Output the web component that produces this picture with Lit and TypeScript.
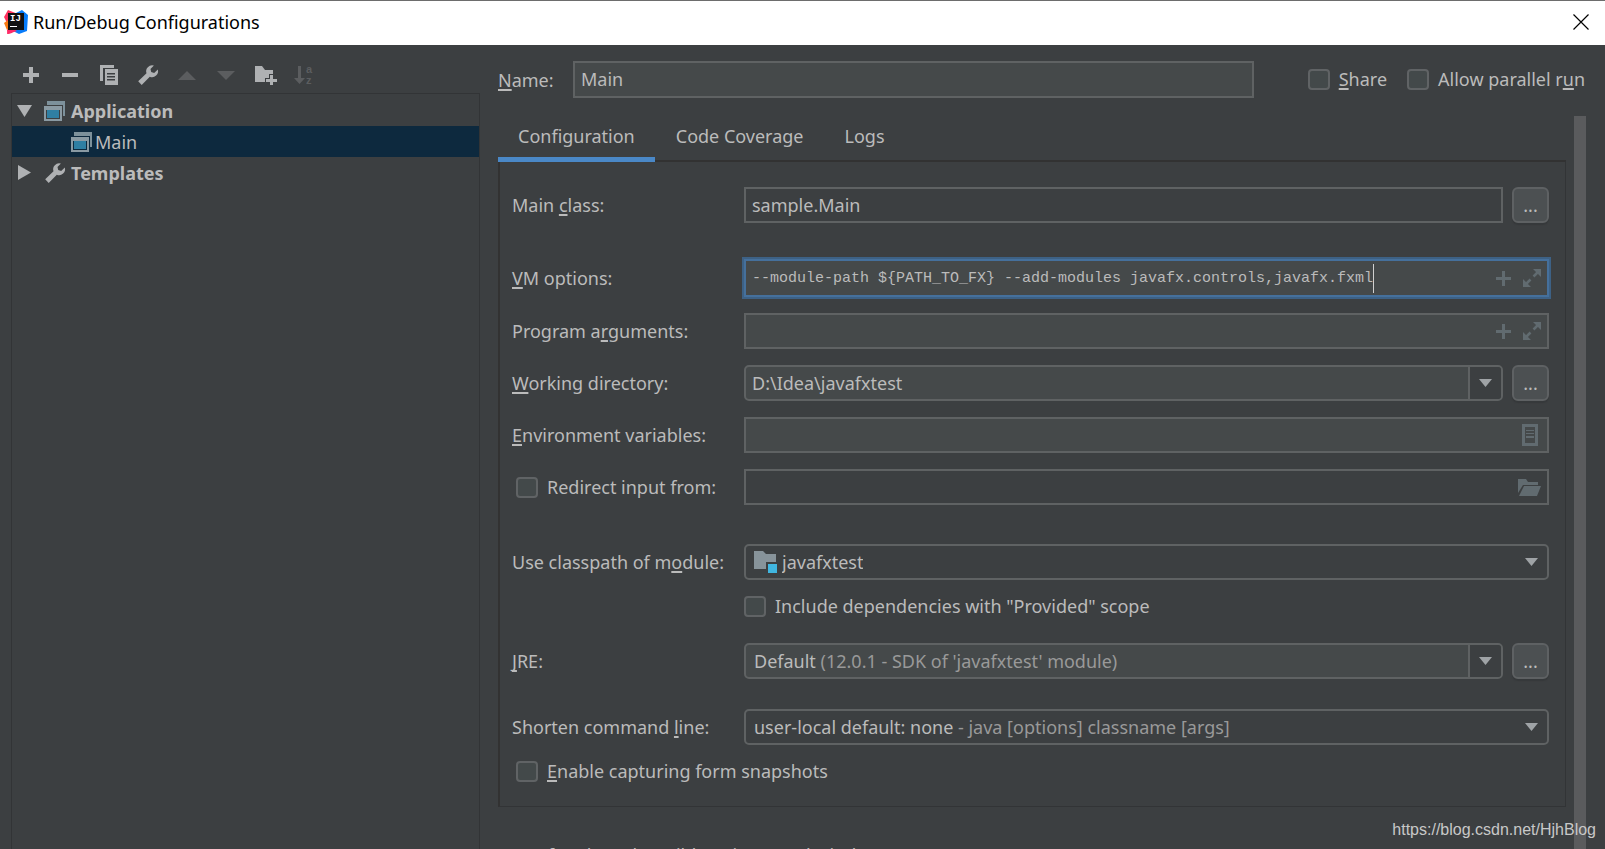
import { LitElement, html, svg, css } from "lit";
import { customElement } from "lit/decorators.js";

const svgIcon = (w: number, h: number, body: unknown) =>
  html`<svg class="icon" width=${w} height=${h} viewBox="0 0 ${w} ${h}" aria-hidden="true">${body}</svg>`;

const plus = (s: number, t: number) => {
  const a = (s - t) / 2;
  return svgIcon(s, s, svg`<path fill="currentColor" d="M${a} 0h${t}v${a}h${a}v${t}h-${a}v${a}h-${t}v-${a}h-${a}v-${t}h${a}z"/>`);
};
const minus = svgIcon(16, 4, svg`<path fill="currentColor" d="M0 0h16v4H0z"/>`);
const copy = svgIcon(18, 20, svg`
  <path fill="currentColor" d="M0 0h14v3H3v13H0z"/>
  <path fill="currentColor" fill-rule="evenodd" d="M5 4h13v16H5zM7 8v1.500h8V8zM7 11v1.500h8V11zM7 14v1.500h8V14z"/>`);
const wrench = svgIcon(20, 20, svg`
  <path fill="currentColor" d="M15.9.6a6 6 0 0 0-7.4 7.7L.2 16.3 3.7 20l8.1-8.3a6 6 0 0 0 8-7.3l-3.6 3.5-3-.8-.7-3z"/>`);
const up = svgIcon(18, 9, svg`<path fill="currentColor" d="M9 0l9 9H0z"/>`);
const down = svgIcon(18, 9, svg`<path fill="currentColor" d="M0 0h18L9 9z"/>`);
const folderAdd = svgIcon(22, 19, svg`
  <path fill="currentColor" d="M1 0h7l3 4h8v4h-4v4h-4v4H1z"/>
  <path fill="currentColor" d="M16 9h3v4h4v3h-4v3h-3v-3h-4v-3h4z"/>`);
const sortAz = svgIcon(20, 20, svg`
  <path fill="currentColor" d="M4 1h3v12h4l-5.500 6L0 13h4z"/>
  <text x="12" y="8" class="glyph">a</text><text x="12" y="19" class="glyph">z</text>`);
const app = svgIcon(22, 20, svg`
  <path fill="#7d919b" d="M3 0h18v15h-2V4H3z"/>
  <path fill="#8a9aa3" fill-rule="evenodd" d="M0 5h18v15H0zM2 9v9h14V9z"/>
  <path fill="#2f7fa3" d="M3 9h12v8H3z"/>`);
const treeDown = svgIcon(15, 12, svg`<path fill="#afb1b3" d="M0 0h15L7.500 12z"/>`);
const treeRight = svgIcon(13, 15, svg`<path fill="#afb1b3" d="M0 0l13 7.500L0 15z"/>`);
const arrow = svgIcon(13, 8, svg`<path fill="#9fa3a6" d="M0 0h13L6.500 8z"/>`);
const expand = svgIcon(18, 18, svg`
  <path fill="currentColor" d="M10 0h8v8zM0 10v8h8z"/>
  <path stroke="currentColor" stroke-width="2.500" d="M15.500 2.500l-5 5M2.500 15.500l5-5"/>`);
const docIcon = svgIcon(16, 22, svg`
  <path fill="currentColor" fill-rule="evenodd" d="M0 0h16v22H0zM3 3v16h10V3z"/>
  <path fill="currentColor" d="M4 6h8v1H4zM4 9h8v1H4zM4 12h8v2H4z"/>`);
const folderOpen = svgIcon(23, 17, svg`
  <path fill="currentColor" d="M0 0h8l2 3h10v3H5L0 14z"/>
  <path fill="currentColor" d="M6 7h17l-4 10H1z"/>`);
const moduleIcon = svgIcon(24, 22, svg`
  <path fill="#87939a" d="M0 0h9l3 3h10v8h-10v7H0z"/>
  <path fill="#40b6e0" d="M14 13h9v9h-9z"/>`);
const logo = svgIcon(24, 24, svg`
  <path fill="#fe315d" d="M4 0l10 4-2 10-4 9-5 1 1-9-4-8z"/>
  <path fill="#f97a12" d="M0 13l4-3 3 6-4 4z"/>
  <path fill="#087cfa" d="M12 3l6-3 6 5-1 16-8 3-8-4z"/>
  <path fill="#fe2a6a" d="M3 20l5-2 5 3-9 3z"/>
  <path fill="#111" d="M4 3h16v17H4z"/>
  <text x="6" y="11" class="logo-text">IJ</text>
  <path fill="#fff" d="M6 16h7v1H6z"/>`);
const closeIcon = svgIcon(16, 16, svg`<path stroke="#000" stroke-width="1.200" d="M.5.5l15 15M15.500.5l-15 15"/>`);

@customElement("app-root")
export class AppRoot extends LitElement {
  static styles = css`
    :host {
      display: flex; flex-direction: column; height: 100vh; overflow: hidden;
      position: relative; background: #3c3f41; color: #bbbbbb;
      font: 18px/24px "Noto Sans", "Open Sans", sans-serif;
    }
    * { box-sizing: border-box; }
    .icon { display: block; flex: none; overflow: visible; }
    .glyph { font: 700 11px "Liberation Sans", sans-serif; fill: currentColor; }
    .logo-text { font: 700 9px "Liberation Mono", monospace; fill: #fff; }
    button, input, select { font: inherit; color: inherit; margin: 0; padding: 0; border: 0; background: none; outline: 0; }
    u { text-decoration-thickness: 2px; text-underline-offset: 2px; text-decoration-skip-ink: none; }

    .titlebar {
      display: flex; align-items: center; flex: none; height: 45px; padding: 0 16px 2px 4px;
      background: #fff; color: #000; border-top: 1px solid #6d6d6d;
    }
    .titlebar h1 { flex: 1; margin: 0 0 0 5px; font-size: 18px; font-weight: 400; }
    .body { display: flex; flex: 1; min-height: 0; }

    .side { display: flex; flex-direction: column; width: 469px; margin: 0 18px 0 11px; }
    .toolbar { display: flex; gap: 15px; padding: 18px 0 6px 8px; }
    .toolbar button { display: grid; place-items: center; width: 24px; height: 24px; color: #afb1b3; }
    .toolbar button:disabled { color: #5b5d5f; }
    .tree { flex: 1; margin: 0; padding: 1px 0 0; border: 1px solid #323436; border-bottom: 0; list-style: none; }
    .node { display: flex; align-items: center; height: 31px; padding-left: 4px; gap: 2px; }
    .node .icon { color: #afb1b3; }
    .twist { display: grid; place-items: center; width: 16px; }
    .kind { display: grid; place-items: center; width: 22px; margin-left: 8px; }
    .group { font-weight: 700; gap: 5px; }
    .group .kind { margin-left: 7px; }
    .selected { background: #0d293e; padding-left: 51px; }

    .main { display: flex; flex-direction: column; flex: 1; min-width: 0; padding-right: 19px; }
    .namebar { display: flex; align-items: center; padding: 16px 1px 18px 0; }
    .namebar > label:first-child { width: 75px; }
    .namebar .field { flex: 1; height: 37px; padding-bottom: 1px; margin-right: 54px; }
    .namebar .check + .check { margin-left: 20px; }
    .check { display: flex; align-items: center; gap: 9px; line-height: 21px; }
    .check input {
      appearance: none; flex: none; width: 22px; height: 21px; border: 2px solid #606365;
      border-radius: 4px; background: #43494a;
    }
    .scroll { display: flex; flex: 1; min-height: 0; gap: 8px; }
    .bar { width: 12px; background: #5a5b5d; }
    .page { flex: 1; min-width: 0; overflow: hidden; }
    .tabs { display: flex; gap: 1px; position: relative; margin-bottom: -2px; }
    .tabs button { height: 46px; padding: 0 20px 2px; border-bottom: 5px solid transparent; }
    .tabs .active { border-color: #4a88c7; }
    .panel {
      display: grid; grid-template-columns: 232px minmax(0, 1fr); align-items: center;
      padding: 25px 16px 24px 12px; border: 1px solid #323436; border-top: 2px solid #323232; border-left: 2px solid #323232;
    }
    .panel > label { white-space: nowrap; }
    .field {
      display: flex; align-items: center; min-width: 0; height: 36px; padding: 0 6px;
      border: 2px solid #5f6263; background: #45494a;
    }
    .plain { background: transparent; }
    .round { border-radius: 5px; }
    .field input { flex: 1; min-width: 0; height: 100%; }
    .field > .icon { color: #616b70; }
    .split { padding-right: 0; }
    .split > .hint { flex: 1; }
    .drop { display: grid; place-items: center; width: 33px; height: 32px; border-left: 2px solid #5f6263; border-radius: 0 3px 3px 0; background: #3c3f41; }
    .with-button { display: flex; gap: 9px; min-width: 0; }
    .with-button .field { flex: 1; }
    .browse {
      width: 37px; height: 36px; border: 2px solid #5e6163; border-radius: 6px;
      background: #4c5052; box-shadow: 0 2px 1px #36393b;
    }
    .field select { appearance: none; field-sizing: content; height: 100%; cursor: pointer; }
    .field option { background: #3c3f41; }
    .hint { color: #999999; white-space: pre; }
    .end { margin-left: auto; margin-right: 3px; }
    .gap { margin-bottom: 36px; }
    .gap-s { margin-bottom: 16px; }
    .gap-m { margin-bottom: 26px; }
    .gap-n { margin-bottom: 30px; }
    .gap-l { margin-bottom: 39px; }
    .vm { height: 38px; border-color: #45709c; box-shadow: 0 0 0 2px #3d6185; }
    .vm input { flex: none; field-sizing: content; font: 15px/32px "Liberation Mono", monospace; }
    .caret { width: 1px; height: 29px; background: #d0d0d0; }
    .pair { display: flex; align-items: center; gap: 12px; margin-left: auto; color: #616b70; }
    .indent { padding-left: 4px; }
    .wide { grid-column: 1 / -1; }
    .second { grid-column: 2; }
    .module { margin-right: 4px; }
    .combo { padding-left: 8px; }
    .launch { display: flex; align-items: end; gap: 11px; margin: 36px 0 0 2px; white-space: nowrap; }
    .mark {
      position: absolute; right: 9px; bottom: 7px;
      font: 16px/24px "Liberation Sans", sans-serif; color: #c8c8c8;
    }
  `;

  render() {
    return html`
      <header class="titlebar">${logo}<h1>Run/Debug Configurations</h1><button aria-label="Close">${closeIcon}</button></header>
      <div class="body">
        <aside class="side">
          <div class="toolbar">
            <button aria-label="Add">${plus(16, 4)}</button>
            <button aria-label="Remove">${minus}</button>
            <button aria-label="Copy">${copy}</button>
            <button aria-label="Edit templates">${wrench}</button>
            <button aria-label="Move up" disabled>${up}</button>
            <button aria-label="Move down" disabled>${down}</button>
            <button aria-label="Create folder">${folderAdd}</button>
            <button aria-label="Sort" disabled>${sortAz}</button>
          </div>
          <ul class="tree">
            <li class="node group"><span class="twist">${treeDown}</span><span class="kind">${app}</span>Application</li>
            <li class="node selected"><span class="kind">${app}</span>Main</li>
            <li class="node group"><span class="twist">${treeRight}</span><span class="kind">${wrench}</span>Templates</li>
          </ul>
        </aside>
        <main class="main">
          <div class="namebar">
            <label for="name"><u>N</u>ame:</label>
            <div class="field"><input id="name" .value=${"Main"}></div>
            <label class="check"><input type="checkbox"><span><u>S</u>hare</span></label>
            <label class="check"><input type="checkbox"><span>Allow parallel r<u>u</u>n</span></label>
          </div>
          <div class="scroll">
            <div class="page">
              <nav class="tabs">
                <button class="active">Configuration</button><button>Code Coverage</button><button>Logs</button>
              </nav>
              <section class="panel">
                <label class="gap" for="cls">Main <u>c</u>lass:</label>
                <div class="with-button gap">
                  <div class="field plain"><input id="cls" .value=${"sample.Main"}></div>
                  <button class="browse" aria-label="Browse class">...</button>
                </div>
                <label class="gap-s" for="vm"><u>V</u>M options:</label>
                <div class="field vm gap-s">
                  <input id="vm" spellcheck="false" .value=${"--module-path ${PATH_TO_FX} --add-modules javafx.controls,javafx.fxml"}>
                  <span class="caret"></span>
                  <span class="pair">${plus(15, 3)}${expand}</span>
                </div>
                <label class="gap-s" for="args">Program a<u>r</u>guments:</label>
                <div class="field gap-s"><input id="args"><span class="pair">${plus(15, 3)}${expand}</span></div>
                <label class="gap-s" for="dir"><u>W</u>orking directory:</label>
                <div class="with-button gap-s">
                  <div class="field round split"><input id="dir" .value=${"D:\\Idea\\javafxtest"}><button class="drop" aria-label="Recent directories">${arrow}</button></div>
                  <button class="browse" aria-label="Browse directory">...</button>
                </div>
                <label class="gap-s" for="env"><u>E</u>nvironment variables:</label>
                <div class="field gap-s"><input id="env"><span class="pair end">${docIcon}</span></div>
                <label class="check indent gap-l"><input type="checkbox"><span>Redirect input from:</span></label>
                <div class="field plain gap-l"><input aria-label="Redirect input from">${folderOpen}</div>
                <label class="gap-s" for="mod">Use classpath of m<u>o</u>dule:</label>
                <div class="field plain round combo gap-s"><span class="module">${moduleIcon}</span><select id="mod"><option>javafxtest</option></select><span class="end">${arrow}</span></div>
                <label class="check second gap-m"><input type="checkbox"><span>Include dependencies with "Provided" scope</span></label>
                <label class="gap-n" for="jre"><u>J</u>RE:</label>
                <div class="with-button gap-n">
                  <div class="field round split combo"><select id="jre"><option>Default</option></select><span class="hint"> (12.0.1 - SDK of 'javafxtest' module)</span><span class="drop">${arrow}</span></div>
                  <button class="browse" aria-label="Browse JRE">...</button>
                </div>
                <label class="gap-s" for="short">Shorten command <u>l</u>ine:</label>
                <div class="field plain round combo gap-s"><select id="short"><option>user-local default: none</option></select><span class="hint"> - java [options] classname [args]</span><span class="end">${arrow}</span></div>
                <label class="check indent wide"><input type="checkbox"><span><u>E</u>nable capturing form snapshots</span></label>
              </section>
              <div class="launch">${treeDown}<span>Before launch: Build, Activate tool window</span></div>
            </div>
            <div class="bar"></div>
          </div>
        </main>
      </div>
      <div class="mark">https://blog.csdn.net/HjhBlog</div>
    `;
  }
}
